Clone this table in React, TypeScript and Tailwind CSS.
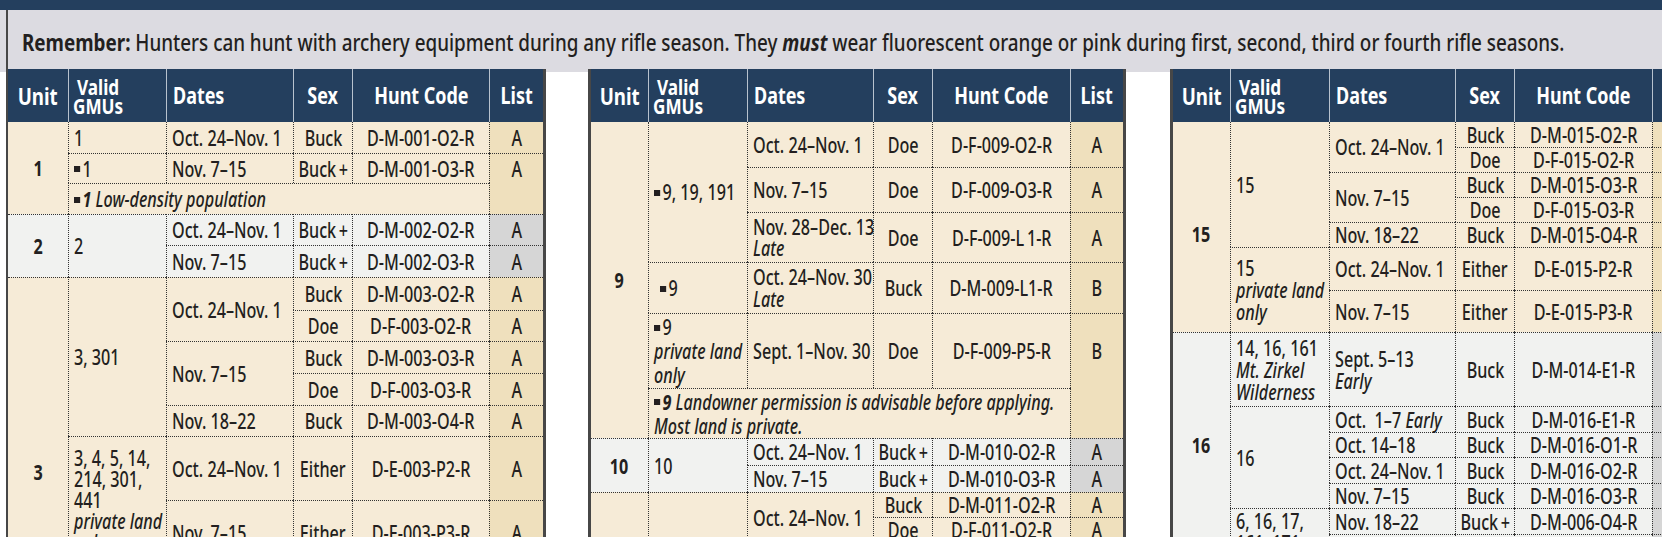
import React from "react";

const FONT = "font-['Noto_Sans',sans-serif]";
const cellBase = "p-0 align-middle border-dotted border-[#333333] leading-[22px] whitespace-nowrap";

type K = "u" | "l" | "c";

function Nar({ children, left, s = "body" }: { children?: React.ReactNode; left?: boolean; s?: "body" | "head" }) {
  const sc = s === "head" ? "scale-x-[0.78]" : "scale-x-[0.77]";
  return (
    <div className={`flex ${left ? "justify-start" : "justify-center"}`}>
      <span className={`block shrink-0 whitespace-nowrap ${sc} ${left ? "origin-left" : "origin-center"}`}>{children}</span>
    </div>
  );
}

function Td(props: {
  children?: React.ReactNode;
  t?: boolean;
  l?: boolean;
  rs?: number;
  cs?: number;
  k: K;
  bg: string;
  cls?: string;
}) {
  const { children, t = true, l = true, rs, cs, k, bg, cls = "" } = props;
  const kc =
    k === "u"
      ? "text-center font-bold text-[21px]"
      : k === "l"
      ? "text-left pl-[5px] font-medium"
      : "text-center font-medium";
  return (
    <td
      rowSpan={rs}
      colSpan={cs}
      className={[cellBase, t ? "border-t" : "", l ? "border-l" : "", kc, bg, cls].join(" ")}
    >
      <Nar left={k === "l"}>{children}</Nar>
    </td>
  );
}

function Sq() {
  return <span className="inline-block w-[8px] h-[6px] bg-[#231f20] mr-[3px] mb-[3px] align-middle" />;
}

const BE = { bg: "bg-[#f6ebd7]", list: "bg-[#efe0bd]" };
const GR = { bg: "bg-[#f1f2f0]", list: "bg-[#d6d6d6]" };

const thBase = "p-0 align-middle font-bold text-white whitespace-nowrap";
const sep = "border-l border-[#b8c2ce]";

function Head() {
  return (
    <thead>
      <tr className="h-[53px] bg-[#243f5e]">
        <th className={`${thBase} text-[24px]`}>
          <Nar s="head">Unit</Nar>
        </th>
        <th className={`${thBase} ${sep} pl-[4px] text-[22px] leading-[19px]`}>
          <Nar s="head" left>
            Valid
            <br />
            GMUs
          </Nar>
        </th>
        <th className={`${thBase} ${sep} pl-[6px] text-[23px]`}>
          <Nar s="head" left>Dates</Nar>
        </th>
        <th className={`${thBase} ${sep} text-[23px]`}>
          <Nar s="head">Sex</Nar>
        </th>
        <th className={`${thBase} ${sep} text-[23px]`}>
          <Nar s="head">Hunt Code</Nar>
        </th>
        <th className={`${thBase} ${sep} text-[23px]`}>
          <Nar s="head">List</Nar>
        </th>
      </tr>
    </thead>
  );
}

function Table1() {
  const b = BE.bg,
    li = BE.list,
    g = GR.bg,
    gl = GR.list;
  return (
    <table className="table-fixed border-separate border-spacing-0 w-[535px]">
      <colgroup>
        <col className="w-[60px]" />
        <col className="w-[98px]" />
        <col className="w-[127px]" />
        <col className="w-[59px]" />
        <col className="w-[137px]" />
        <col className="w-[54px]" />
      </colgroup>
      <Head />
      <tbody>
        <tr className="h-[31px]">
          <Td rs={3} t={false} l={false} k="u" bg={b}>1</Td>
          <Td t={false} k="l" bg={b}>1</Td>
          <Td t={false} k="l" bg={b}>Oct. 24–Nov. 1</Td>
          <Td t={false} k="c" bg={b}>Buck</Td>
          <Td t={false} k="c" bg={b}>D-M-001-O2-R</Td>
          <Td t={false} k="c" bg={li}>A</Td>
        </tr>
        <tr className="h-[30px]">
          <Td k="l" bg={b}><Sq />1</Td>
          <Td k="l" bg={b}>Nov. 7–15</Td>
          <Td k="c" bg={b}>Buck&thinsp;+</Td>
          <Td k="c" bg={b}>D-M-001-O3-R</Td>
          <Td k="c" bg={li}>A</Td>
        </tr>
        <tr className="h-[31px]">
          <Td cs={4} k="l" bg={b} cls="italic">
            <Sq />
            <b>1</b> Low-density population
          </Td>
          <Td t={false} k="c" bg={li}></Td>
        </tr>

        <tr className="h-[31px]">
          <Td rs={2} l={false} k="u" bg={g}>2</Td>
          <Td rs={2} k="l" bg={g}>2</Td>
          <Td k="l" bg={g}>Oct. 24–Nov. 1</Td>
          <Td k="c" bg={g}>Buck&thinsp;+</Td>
          <Td k="c" bg={g}>D-M-002-O2-R</Td>
          <Td k="c" bg={gl}>A</Td>
        </tr>
        <tr className="h-[32px]">
          <Td k="l" bg={g}>Nov. 7–15</Td>
          <Td k="c" bg={g}>Buck&thinsp;+</Td>
          <Td k="c" bg={g}>D-M-002-O3-R</Td>
          <Td k="c" bg={gl}>A</Td>
        </tr>

        <tr className="h-[33px]">
          <Td rs={7} l={false} k="u" bg={b} cls="!align-top pt-[183px]">3</Td>
          <Td rs={5} k="l" bg={b}>3, 301</Td>
          <Td rs={2} k="l" bg={b}>Oct. 24–Nov. 1</Td>
          <Td k="c" bg={b}>Buck</Td>
          <Td k="c" bg={b}>D-M-003-O2-R</Td>
          <Td k="c" bg={li}>A</Td>
        </tr>
        <tr className="h-[31px]">
          <Td k="c" bg={b}>Doe</Td>
          <Td k="c" bg={b}>D-F-003-O2-R</Td>
          <Td k="c" bg={li}>A</Td>
        </tr>
        <tr className="h-[32px]">
          <Td rs={2} k="l" bg={b}>Nov. 7–15</Td>
          <Td k="c" bg={b}>Buck</Td>
          <Td k="c" bg={b}>D-M-003-O3-R</Td>
          <Td k="c" bg={li}>A</Td>
        </tr>
        <tr className="h-[32px]">
          <Td k="c" bg={b}>Doe</Td>
          <Td k="c" bg={b}>D-F-003-O3-R</Td>
          <Td k="c" bg={li}>A</Td>
        </tr>
        <tr className="h-[31px]">
          <Td k="l" bg={b}>Nov. 18–22</Td>
          <Td k="c" bg={b}>Buck</Td>
          <Td k="c" bg={b}>D-M-003-O4-R</Td>
          <Td k="c" bg={li}>A</Td>
        </tr>
        <tr className="h-[64px]">
          <Td rs={2} k="l" bg={b} cls="!leading-[21px]">
            3, 4, 5, 14,
            <br />
            214, 301,
            <br />
            441
            <br />
            <i>private land</i>
            <br />
            <i>only</i>
          </Td>
          <Td k="l" bg={b}>Oct. 24–Nov. 1</Td>
          <Td k="c" bg={b}>Either</Td>
          <Td k="c" bg={b}>D-E-003-P2-R</Td>
          <Td k="c" bg={li}>A</Td>
        </tr>
        <tr className="h-[64px]">
          <Td k="l" bg={b}>Nov. 7–15</Td>
          <Td k="c" bg={b}>Either</Td>
          <Td k="c" bg={b}>D-E-003-P3-R</Td>
          <Td k="c" bg={li}>A</Td>
        </tr>
      </tbody>
    </table>
  );
}

function Cols2() {
  return (
    <colgroup>
      <col className="w-[57px]" />
      <col className="w-[99px]" />
      <col className="w-[126px]" />
      <col className="w-[59px]" />
      <col className="w-[138px]" />
      <col className="w-[53px]" />
    </colgroup>
  );
}

function Table2() {
  const b = BE.bg,
    li = BE.list,
    g = GR.bg,
    gl = GR.list;
  return (
    <table className="table-fixed border-separate border-spacing-0 w-[532px]">
      <Cols2 />
      <Head />
      <tbody>
        <tr className="h-[45px]">
          <Td rs={6} t={false} l={false} k="u" bg={b}>9</Td>
          <Td rs={3} t={false} k="l" bg={b}><Sq />9, 19, 191</Td>
          <Td t={false} k="l" bg={b}>Oct. 24–Nov. 1</Td>
          <Td t={false} k="c" bg={b}>Doe</Td>
          <Td t={false} k="c" bg={b}>D-F-009-O2-R</Td>
          <Td t={false} k="c" bg={li}>A</Td>
        </tr>
        <tr className="h-[45px]">
          <Td k="l" bg={b}>Nov. 7–15</Td>
          <Td k="c" bg={b}>Doe</Td>
          <Td k="c" bg={b}>D-F-009-O3-R</Td>
          <Td k="c" bg={li}>A</Td>
        </tr>
        <tr className="h-[50px]">
          <Td k="l" bg={b} cls="!leading-[21px]">
            Nov. 28–Dec. 13
            <br />
            <i>Late</i>
          </Td>
          <Td k="c" bg={b}>Doe</Td>
          <Td k="c" bg={b}>D-F-009-L&thinsp;1-R</Td>
          <Td k="c" bg={li}>A</Td>
        </tr>
        <tr className="h-[51px]">
          <Td k="l" bg={b} cls="!pl-[11px]"><Sq />9</Td>
          <Td k="l" bg={b} cls="!leading-[22px]">
            Oct. 24–Nov. 30
            <br />
            <i>Late</i>
          </Td>
          <Td k="c" bg={b}>Buck</Td>
          <Td k="c" bg={b}>D-M-009-L1-R</Td>
          <Td k="c" bg={li}>B</Td>
        </tr>
        <tr className="h-[75px]">
          <Td k="l" bg={b} cls="!leading-[24px]">
            <Sq />9
            <br />
            <i>private land</i>
            <br />
            <i>only</i>
          </Td>
          <Td k="l" bg={b}>Sept. 1–Nov. 30</Td>
          <Td k="c" bg={b}>Doe</Td>
          <Td k="c" bg={b}>D-F-009-P5-R</Td>
          <Td k="c" bg={li}>B</Td>
        </tr>
        <tr className="h-[50px]">
          <Td cs={4} k="l" bg={b} cls="italic !leading-[24px]">
            <Sq />
            <b>9</b> Landowner permission is advisable before applying.
            <br />
            Most land is private.
          </Td>
          <Td t={false} k="c" bg={li}></Td>
        </tr>

        <tr className="h-[27px]">
          <Td rs={2} l={false} k="u" bg={g}>10</Td>
          <Td rs={2} k="l" bg={g}>10</Td>
          <Td k="l" bg={g}>Oct. 24–Nov. 1</Td>
          <Td k="c" bg={g}>Buck&thinsp;+</Td>
          <Td k="c" bg={g}>D-M-010-O2-R</Td>
          <Td k="c" bg={gl}>A</Td>
        </tr>
        <tr className="h-[27px]">
          <Td k="l" bg={g}>Nov. 7–15</Td>
          <Td k="c" bg={g}>Buck&thinsp;+</Td>
          <Td k="c" bg={g}>D-M-010-O3-R</Td>
          <Td k="c" bg={gl}>A</Td>
        </tr>

        <tr className="h-[25px]">
          <Td rs={2} l={false} k="u" bg={b}></Td>
          <Td rs={2} k="l" bg={b}></Td>
          <Td rs={2} k="l" bg={b}>Oct. 24–Nov. 1</Td>
          <Td k="c" bg={b}>Buck</Td>
          <Td k="c" bg={b}>D-M-011-O2-R</Td>
          <Td k="c" bg={li}>A</Td>
        </tr>
        <tr className="h-[25px]">
          <Td k="c" bg={b}>Doe</Td>
          <Td k="c" bg={b}>D-F-011-O2-R</Td>
          <Td k="c" bg={li}>A</Td>
        </tr>
      </tbody>
    </table>
  );
}

function Table3() {
  const b = BE.bg,
    li = BE.list,
    g = GR.bg,
    gl = GR.list;
  return (
    <table className="table-fixed border-separate border-spacing-0 w-[532px]">
      <Cols2 />
      <Head />
      <tbody>
        <tr className="h-[25px]">
          <Td rs={7} t={false} l={false} k="u" bg={b} cls="!align-top pt-[101px]">15</Td>
          <Td rs={5} t={false} k="l" bg={b}>15</Td>
          <Td rs={2} t={false} k="l" bg={b}>Oct. 24–Nov. 1</Td>
          <Td t={false} k="c" bg={b}>Buck</Td>
          <Td t={false} k="c" bg={b}>D-M-015-O2-R</Td>
          <Td t={false} k="c" bg={li}>A</Td>
        </tr>
        <tr className="h-[25px]">
          <Td k="c" bg={b}>Doe</Td>
          <Td k="c" bg={b}>D-F-015-O2-R</Td>
          <Td k="c" bg={li}>A</Td>
        </tr>
        <tr className="h-[25px]">
          <Td rs={2} k="l" bg={b}>Nov. 7–15</Td>
          <Td k="c" bg={b}>Buck</Td>
          <Td k="c" bg={b}>D-M-015-O3-R</Td>
          <Td k="c" bg={li}>A</Td>
        </tr>
        <tr className="h-[25px]">
          <Td k="c" bg={b}>Doe</Td>
          <Td k="c" bg={b}>D-F-015-O3-R</Td>
          <Td k="c" bg={li}>A</Td>
        </tr>
        <tr className="h-[25px]">
          <Td k="l" bg={b}>Nov. 18–22</Td>
          <Td k="c" bg={b}>Buck</Td>
          <Td k="c" bg={b}>D-M-015-O4-R</Td>
          <Td k="c" bg={li}>A</Td>
        </tr>
        <tr className="h-[43px]">
          <Td rs={2} k="l" bg={b}>
            15
            <br />
            <i>private land</i>
            <br />
            <i>only</i>
          </Td>
          <Td k="l" bg={b}>Oct. 24–Nov. 1</Td>
          <Td k="c" bg={b}>Either</Td>
          <Td k="c" bg={b}>D-E-015-P2-R</Td>
          <Td k="c" bg={li}>B</Td>
        </tr>
        <tr className="h-[42px]">
          <Td k="l" bg={b}>Nov. 7–15</Td>
          <Td k="c" bg={b}>Either</Td>
          <Td k="c" bg={b}>D-E-015-P3-R</Td>
          <Td k="c" bg={li}>B</Td>
        </tr>

        <tr className="h-[74px]">
          <Td rs={7} l={false} k="u" bg={g} cls="!align-top pt-[101px]">16</Td>
          <Td k="l" bg={g}>
            14, 16, 161
            <br />
            <i>Mt. Zirkel</i>
            <br />
            <i>Wilderness</i>
          </Td>
          <Td k="l" bg={g}>
            Sept. 5–13
            <br />
            <i>Early</i>
          </Td>
          <Td k="c" bg={g}>Buck</Td>
          <Td k="c" bg={g}>D-M-014-E1-R</Td>
          <Td k="c" bg={gl}>B</Td>
        </tr>
        <tr className="h-[26px]">
          <Td rs={4} k="l" bg={g}>16</Td>
          <Td k="l" bg={g}>
            Oct.&nbsp; 1–7 <i>Early</i>
          </Td>
          <Td k="c" bg={g}>Buck</Td>
          <Td k="c" bg={g}>D-M-016-E1-R</Td>
          <Td k="c" bg={gl}>A</Td>
        </tr>
        <tr className="h-[25px]">
          <Td k="l" bg={g}>Oct. 14–18</Td>
          <Td k="c" bg={g}>Buck</Td>
          <Td k="c" bg={g}>D-M-016-O1-R</Td>
          <Td k="c" bg={gl}>A</Td>
        </tr>
        <tr className="h-[26px]">
          <Td k="l" bg={g}>Oct. 24–Nov. 1</Td>
          <Td k="c" bg={g}>Buck</Td>
          <Td k="c" bg={g}>D-M-016-O2-R</Td>
          <Td k="c" bg={gl}>A</Td>
        </tr>
        <tr className="h-[25px]">
          <Td k="l" bg={g}>Nov. 7–15</Td>
          <Td k="c" bg={g}>Buck</Td>
          <Td k="c" bg={g}>D-M-016-O3-R</Td>
          <Td k="c" bg={gl}>A</Td>
        </tr>
        <tr className="h-[26px]">
          <Td rs={2} k="l" bg={g} cls="!align-top pt-[1px]">
            6, 16, 17,
            <br />
            161, 171
          </Td>
          <Td k="l" bg={g}>Nov. 18–22</Td>
          <Td k="c" bg={g}>Buck&thinsp;+</Td>
          <Td k="c" bg={g}>D-M-006-O4-R</Td>
          <Td k="c" bg={gl}>A</Td>
        </tr>
        <tr className="h-[26px]">
          <Td k="l" bg={g}></Td>
          <Td k="c" bg={g}></Td>
          <Td k="c" bg={g}></Td>
          <Td k="c" bg={gl}></Td>
        </tr>
      </tbody>
    </table>
  );
}

export default function App() {
  return (
    <div className={`w-[1662px] h-[537px] overflow-hidden bg-white text-[#231f20] text-[21px] ${FONT}`}>
      <div className="h-[10px] bg-[#243f5e]" />
      <div className="h-[62px] bg-[#dcdbe1] pl-[6px]">
        <div className="h-full border-l-2 border-[#474747] pl-[14px] pt-[18px] text-[24px] leading-[28px] font-medium">
          <div className="flex justify-start">
            <span className="block shrink-0 whitespace-nowrap origin-left scale-x-[0.785]">
              <b>Remember:</b> Hunters can hunt with archery equipment during any rifle season. They{" "}
              <b>
                <i>must</i>
              </b>{" "}
              wear fluorescent orange or pink during first, second, third or fourth rifle seasons.
            </span>
          </div>
        </div>
      </div>
      <div className="flex items-start -mt-[3px] pl-[6px]">
        <div className="shrink-0 border-l-2 border-r-[3px] border-[#474747]">
          <Table1 />
        </div>
        <div className="shrink-0 ml-[42px] border-l-[3px] border-r-[3px] border-[#474747]">
          <Table2 />
        </div>
        <div className="shrink-0 ml-[44px] border-l-[3px] border-[#474747]">
          <Table3 />
        </div>
      </div>
    </div>
  );
}
